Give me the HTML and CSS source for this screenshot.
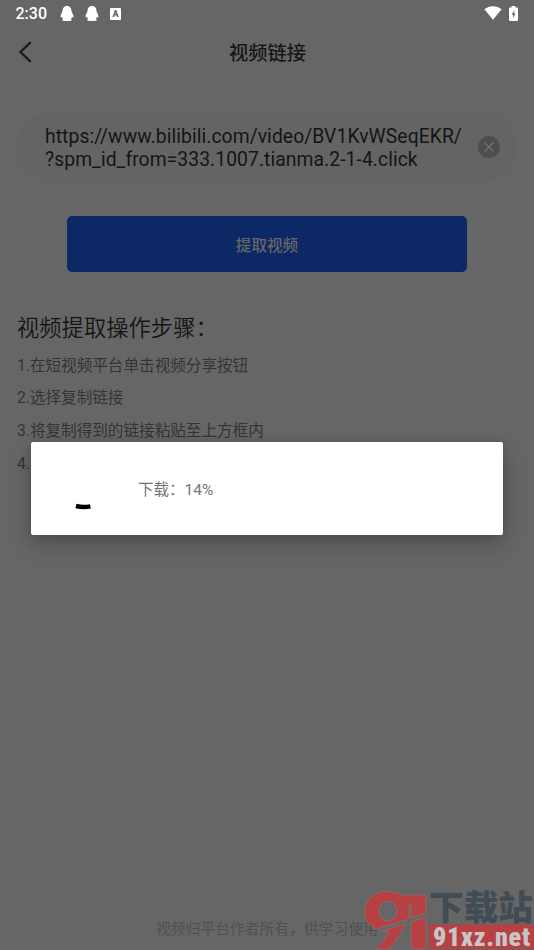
FILE: index.html
```html
<!DOCTYPE html>
<html lang="zh-CN">
<head>
<meta charset="utf-8">
<meta name="viewport" content="width=device-width, initial-scale=1">
<title>视频链接</title>
<link rel="stylesheet" href="styles.css">
</head>
<body>
<main class="screen">
  <div class="status">
    <span class="time">2:30</span>
    <svg class="qq" viewBox="0 0 14 15"><path d="M7 0C4 0 2.500 2 2.500 5 2.400 6.500.5 8 .5 10.600c0 1.200.7 1 1.500.4.200.9.600 1.500 1.200 2-.7.3-1 .5-1 1 0 .8 1.600 1 4.800 1s4.800-.2 4.800-1c0-.5-.3-.7-1-1 .6-.5 1-1.100 1.200-2 .8.6 1.500.8 1.500-.4 0-2.600-1.900-4.100-2-5.600C11.500 2 10 0 7 0z"/></svg>
    <svg class="qq" viewBox="0 0 14 15"><path d="M7 0C4 0 2.500 2 2.500 5 2.400 6.500.5 8 .5 10.600c0 1.200.7 1 1.500.4.200.9.600 1.500 1.200 2-.7.3-1 .5-1 1 0 .8 1.600 1 4.800 1s4.800-.2 4.800-1c0-.5-.3-.7-1-1 .6-.5 1-1.100 1.200-2 .8.6 1.500.8 1.500-.4 0-2.600-1.900-4.100-2-5.600C11.500 2 10 0 7 0z"/></svg>
    <span class="ime">A</span>
    <svg class="wifi" viewBox="0 0 18 14"><path d="M.4 3.200C5.500-.8 12.500-.8 17.600 3.200L9 13.800z"/></svg>
    <svg class="battery" viewBox="0 0 9 15"><path d="M2.600 0h3.800v1.500H8q1 0 1 1V14q0 1-1 1H1q-1 0-1-1V2.500q0-1 1-1h1.600z"/><path class="bolt" d="M5.600 3.800 2.500 8.700h1.800L3.600 12.500 6.700 7.600H4.900z"/></svg>
  </div>
  <header class="nav">
    <svg class="back" viewBox="0 0 14 22"><path d="M12 1.800 2.500 11 12 20.200"/></svg>
    <h1>视频链接</h1>
  </header>
  <div class="field">
    <p class="url">https://www.bilibili.com/video/BV1KvWSeqEKR/<br>?spm_id_from=333.1007.tianma.2-1-4.click</p>
    <svg class="clear" viewBox="0 0 22 22"><circle cx="11" cy="11" r="11"/><path d="m6.500 6.500 9 9m0-9-9 9"/></svg>
  </div>
  <button class="extract">提取视频</button>
  <section class="steps">
    <h2>视频提取操作步骤：</h2>
    <p>1.在短视频平台单击视频分享按钮</p>
    <p>2.选择复制链接</p>
    <p>3.将复制得到的链接粘贴至上方框内</p>
    <p>4.</p>
  </section>
  <footer>视频归平台作者所有，供学习使用</footer>
</main>
<div class="dialog">
  <svg class="spinner" viewBox="0 0 48 48"><path d="M17 42a32 32 0 0 0 14.400.4"/></svg>
  <span class="progress">下载：14%</span>
</div>
<svg class="mark" viewBox="0 0 174 64">
  <g class="mark-logo">
    <path fill-rule="evenodd" d="M27 5.500C12 5.500 5 15 5 27c0 7 3 12 10 14.500L15 43.500 49 33V19L51 18V32L66 27V9H42Q36 5.500 27 5.500zM28 15a9 10 0 1 1 0 20 9 10 0 1 1 0-20z"/>
    <path d="M20 45.500 46 37.500Q40 49 30 63H16q8-9 13-17z"/>
    <path d="M51 36 66 31V63H51z"/>
  </g>
  <rect class="mark-red" x="69" y="38.500" width="105" height="24.500"/>
  <text class="mark-cn" x="69" y="33.500" textLength="104" lengthAdjust="spacingAndGlyphs">下载站</text>
  <text class="mark-url" x="73" y="59.500" textLength="97" lengthAdjust="spacing">91xz.net</text>
</svg>
</body>
</html>
```
FILE: styles.css
```css
* { box-sizing: border-box; margin: 0; padding: 0; }
body {
  position: relative;
  width: 534px;
  height: 950px;
  overflow: hidden;
  background: #666;
  font-family: Roboto, "Noto Sans CJK SC", sans-serif;
}
.screen { display: flex; flex-direction: column; height: 950px; }
.status { display: flex; align-items: center; height: 27px; padding: 0 16px 0 15.500px; color: #fff; }
.status svg { fill: #fff; }
.time { width: 44.500px; font-size: 16px; font-weight: 500; line-height: 27px; }
.qq { width: 14px; height: 15px; margin-right: 10.500px; }
.ime {
  width: 11px; height: 12px; border-radius: 1px; background: #fff; color: #555;
  font-size: 9px; font-weight: 700; line-height: 12px; text-align: center; margin-left: 1px;
}
.wifi { width: 18px; height: 14px; margin: 0 7px 1px auto; }
.battery { width: 9px; height: 15px; margin-bottom: 1px; }
.status .bolt { fill: #666; }
.nav { display: flex; align-items: center; height: 50px; padding: 0 18px; }
.back { width: 14px; height: 22px; fill: none; stroke: #1b1b1b; stroke-width: 2.300; stroke-linecap: round; }
.nav h1 { flex: 1; margin-right: 13px; text-align: center; font-size: 19.300px; font-weight: 500; color: #171717; }
.field {
  display: flex; align-items: center; justify-content: space-between;
  height: 70px; margin: 35px 17px 0; padding: 0 17px 0 28px;
  border-radius: 35px; background: #646464;
}
.url { padding-top: 3px; font-size: 19.300px; line-height: 22.500px; color: #141516; letter-spacing: .08px; white-space: nowrap; }
.clear { flex: none; width: 22px; height: 22px; fill: #4d4d4d; stroke: #707070; stroke-width: 1.400; }
.clear circle { stroke: none; }
.extract {
  align-self: center; width: 400px; height: 56px; margin-top: 34px; border: 0; border-radius: 5px;
  background: #0c2965; color: #666; font: 500 15.600px Roboto, "Noto Sans CJK SC", sans-serif;
}
.steps { padding: 39px 17px 0; }
.steps h2 { height: 38.500px; font-size: 22.300px; line-height: 35px; font-weight: 350; color: #141516; }
.steps p { height: 32.700px; font-size: 15.600px; line-height: 33px; color: #343434; }
footer { margin-top: auto; text-align: center; height: 37px; font-size: 14.800px; line-height: 32px; color: #505050; }
.dialog {
  position: absolute; left: 31px; top: 441.600px; width: 472px; height: 93.400px;
  display: flex; align-items: center; padding-left: 28px;
  border-radius: 2px; background: #fff;
  box-shadow: 0 9px 22px rgba(0,0,0,.24), 0 0 8px rgba(0,0,0,.12);
}
.spinner { width: 48px; height: 48px; fill: none; stroke: #000; stroke-width: 4.500; }
.progress { margin-left: 31px; font-size: 15.500px; color: #757575; }
.mark { position: absolute; left: 360px; top: 886px; width: 174px; height: 64px; }
.mark-logo { fill: #b64042; stroke: #8b7474; stroke-width: .700; }
.mark-red { fill: #b64042; }
.mark-cn { fill: #424c55; font: 900 34px "Noto Sans CJK SC", sans-serif; }
.mark-url { fill: #c8c5c6; font: 900 26px Roboto, sans-serif; font-stretch: 75%; }
```
